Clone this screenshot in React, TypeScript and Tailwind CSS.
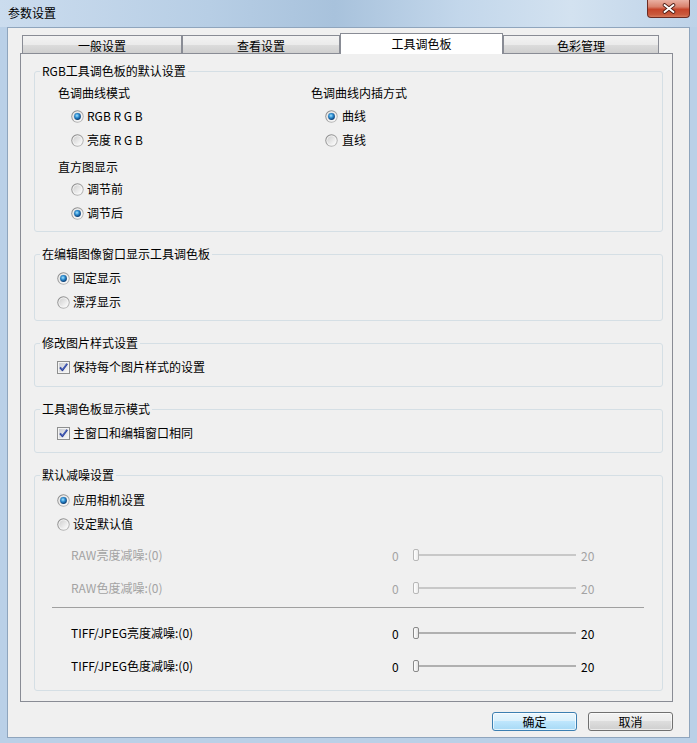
import React from "react";

function Radio({ checked }: { checked?: boolean }) {
  return (
    <svg width="13" height="13" viewBox="0 0 13 13" className="block shrink-0">
      <defs>
        <linearGradient id="radOuter" x1="0" y1="0" x2="1" y2="1">
          <stop offset="0" stopColor="#7f7f7f" />
          <stop offset="1" stopColor="#c4c4c4" />
        </linearGradient>
        <linearGradient id="radInner" x1="0" y1="0" x2="1" y2="1">
          <stop offset="0" stopColor="#cfcfcf" />
          <stop offset="1" stopColor="#fdfdfd" />
        </linearGradient>
        <radialGradient id="radDot" cx="0.42" cy="0.38" r="0.62">
          <stop offset="0" stopColor="#a6e4ff" />
          <stop offset="0.5" stopColor="#2a8bd0" />
          <stop offset="1" stopColor="#0a3a70" />
        </radialGradient>
      </defs>
      <circle cx="6.5" cy="6.5" r="6.2" fill="url(#radOuter)" />
      <circle cx="6.5" cy="6.5" r="5.2" fill="#f6f6f6" />
      <circle cx="6.5" cy="6.5" r="4.3" fill="url(#radInner)" />
      {checked && <circle cx="6.5" cy="6.5" r="3.4" fill="url(#radDot)" />}
    </svg>
  );
}

function Check() {
  return (
    <svg width="13" height="13" viewBox="0 0 13 13" className="block shrink-0">
      <defs>
        <linearGradient id="chkInner" x1="0" y1="0" x2="1" y2="1">
          <stop offset="0" stopColor="#c9ccd2" />
          <stop offset="1" stopColor="#f7f7f7" />
        </linearGradient>
      </defs>
      <rect x="0.5" y="0.5" width="12" height="12" fill="#f4f4f4" stroke="#8e8f8f" />
      <rect x="2" y="2" width="9" height="9" fill="url(#chkInner)" />
      <path d="M3 6.4 L5.4 9.2 L10.2 2.8" fill="none" stroke="#2b3f9a" strokeWidth="1.9" strokeLinejoin="round" />
      <path d="M3.6 6.6 L5.4 8.6 L9.6 3.2" fill="none" stroke="#5c7ad0" strokeWidth="0.7" />
    </svg>
  );
}

function Slider({ disabled }: { disabled?: boolean }) {
  return (
    <div className="relative w-[163px] h-[12px] flex items-center">
      <div className={disabled ? "w-full h-[2px] bg-[#c8c8c8]" : "w-full h-[2px] bg-[#b0b0b0]"} />
      <div
        className={
          disabled
            ? "absolute left-0 top-0 w-[6px] h-[12px] rounded-[2px] border border-[#b8b8b8] bg-[linear-gradient(90deg,#ffffff,#ececec)]"
            : "absolute left-0 top-0 w-[6px] h-[12px] rounded-[2px] border border-[#8a8a8a] bg-[linear-gradient(90deg,#ffffff,#e2e2e2)]"
        }
      />
    </div>
  );
}

function SliderRow({ label, disabled }: { label: string; disabled?: boolean }) {
  const color = disabled ? "text-[#a3a3a3]" : "text-black";
  return (
    <div className={"flex items-center h-[33px] pl-[36px] " + color}>
      <span className="w-[321px] leading-[16px]">{label}</span>
      <span className="w-[21px] leading-[16px] mt-[2px]">0</span>
      <Slider disabled={disabled} />
      <span className="ml-[5px] leading-[16px] mt-[2px]">20</span>
    </div>
  );
}

function RadioRow({ label, checked, className }: { label: string; checked?: boolean; className: string }) {
  return (
    <div className={"flex items-center h-[24px] " + className}>
      <Radio checked={checked} />
      <span className="leading-[16px]">{label}</span>
    </div>
  );
}

function Group({ title, className, children }: { title: string; className: string; children: React.ReactNode }) {
  return (
    <fieldset className={"border border-[#d5dfe5] rounded-[3px] m-0 p-0 " + className}>
      <legend className="ml-[5px] px-[2px] h-[16px] leading-[16px] text-[12px]">{title}</legend>
      {children}
    </fieldset>
  );
}

function Tab({ label, w, selected }: { label: string; w: string; selected?: boolean }) {
  if (selected) {
    return (
      <div className={"relative z-10 -mb-px h-[21px] border border-b-0 border-[#898c95] bg-white flex justify-center pt-[2px] " + w}>
        <span className="leading-[16px]">{label}</span>
      </div>
    );
  }
  return (
    <div
      className={
        "h-[18px] border border-b-0 border-[#898c95] bg-[linear-gradient(180deg,#f3f3f3_0%,#ebebeb_50%,#dddddd_50%,#cfcfcf_100%)] flex justify-center items-center pt-[2px] " +
        w
      }
    >
      <span className="leading-[16px]">{label}</span>
    </div>
  );
}

export default function App() {
  return (
    <div className="w-[697px] h-[743px] flex flex-col bg-[#bad0e7] font-['Noto_Sans_CJK_SC','Noto_Sans',sans-serif] text-[12px] text-black overflow-hidden">
      {/* title bar */}
      <div className="h-[27px] shrink-0 flex justify-between items-start pl-[8px] pr-[7px] bg-[linear-gradient(90deg,#cbdcee_0%,#b7cee5_30%,#a8c2dc_48%,#c3d7eb_66%,#d3e2f0_82%,#bdd2e8_100%)]">
        <span className="leading-[16px] mt-[5px]">参数设置</span>
        <div className="w-[43px] h-[18px] rounded-b-[4px] border border-t-0 border-[#6b2b22] bg-[linear-gradient(180deg,#eab0a2_0%,#d9826d_40%,#c6452b_55%,#c9593c_85%,#d77a5c_100%)] flex items-center justify-center">
          <svg width="14" height="11" viewBox="0 0 14 11">
            <path d="M2.5 2 L11.5 9 M11.5 2 L2.5 9" stroke="#4a1a12" strokeWidth="3.6" strokeLinecap="round" />
            <path d="M2.5 2 L11.5 9 M11.5 2 L2.5 9" stroke="#ffffff" strokeWidth="2" strokeLinecap="round" />
          </svg>
        </div>
      </div>

      {/* client area */}
      <div className="flex-1 mx-[7px] mb-[5px] border border-[#8fa5bd] bg-[#f0f0f0] flex flex-col">
        <div className="ml-[12px] mr-[16px] mt-[5px] flex flex-col">
          <div className="flex items-end h-[20px] pl-[2px]">
            <Tab label="一般设置" w="w-[160px]" />
            <Tab label="查看设置" w="w-[158px]" />
            <Tab label="工具调色板" w="w-[163px]" selected />
            <Tab label="色彩管理" w="w-[156px]" />
          </div>
          <div className="h-[649px] border border-[#898c95] bg-[#f0f0f0] pl-[13px] pr-[9px] pt-[9px] flex flex-col gap-[14px]">
            <Group title="RGB工具调色板的默认设置" className="pt-[3px] pb-[6px]">
              <div className="flex pl-[23px]">
                <div className="w-[253px] flex flex-col">
                  <div className="h-[22px] flex items-center leading-[16px]">色调曲线模式</div>
                  <RadioRow label="RGB R G B" checked className="pl-[13px] gap-[3px]" />
                  <RadioRow label="亮度 R G B" className="pl-[13px] gap-[3px]" />
                  <div className="h-[20px] mt-[5px] flex items-center leading-[16px]">直方图显示</div>
                  <RadioRow label="调节前" className="pl-[13px] gap-[3px]" />
                  <RadioRow label="调节后" checked className="pl-[13px] gap-[3px]" />
                </div>
                <div className="flex flex-col">
                  <div className="h-[22px] flex items-center leading-[16px]">色调曲线内插方式</div>
                  <RadioRow label="曲线" checked className="pl-[14px] gap-[4px]" />
                  <RadioRow label="直线" className="pl-[14px] gap-[4px]" />
                </div>
              </div>
            </Group>

            <Group title="在编辑图像窗口显示工具调色板" className="pt-[4px] pb-[6px]">
              <RadioRow label="固定显示" checked className="pl-[22px] gap-[3px]" />
              <RadioRow label="漂浮显示" className="pl-[22px] gap-[3px]" />
            </Group>

            <Group title="修改图片样式设置" className="pt-[4px] pb-[7px]">
              <div className="flex items-center h-[24px] pl-[22px] gap-[3px]">
                <Check />
                <span className="leading-[16px]">保持每个图片样式的设置</span>
              </div>
            </Group>

            <Group title="工具调色板显示模式" className="pt-[4px] pb-[7px]">
              <div className="flex items-center h-[24px] pl-[22px] gap-[3px]">
                <Check />
                <span className="leading-[16px]">主窗口和编辑窗口相同</span>
              </div>
            </Group>

            <Group title="默认减噪设置" className="pt-[5px] pb-[8px]">
              <RadioRow label="应用相机设置" checked className="pl-[22px] gap-[3px]" />
              <RadioRow label="设定默认值" className="pl-[22px] gap-[3px]" />
              <div className="mt-[2px]">
                <SliderRow label="RAW亮度减噪:(0)" disabled />
                <SliderRow label="RAW色度减噪:(0)" disabled />
              </div>
              <div className="mt-[3px] ml-[17px] mr-[18px] h-px bg-[#a0a0a0]" />
              <div className="mt-[8px]">
                <SliderRow label="TIFF/JPEG亮度减噪:(0)" />
                <SliderRow label="TIFF/JPEG色度减噪:(0)" />
              </div>
            </Group>
          </div>
        </div>

        <div className="flex justify-end gap-[11px] mt-[10px] mr-[16px]">
          <div className="w-[85px] h-[19px] rounded-[3px] border border-[#3c7fb1] bg-[linear-gradient(180deg,#eaf6fd_0%,#d9f0fc_50%,#bee6fd_50%,#a7d9f5_100%)] shadow-[inset_0_0_0_1px_rgba(255,255,255,0.7)] flex items-center justify-center">
            <span className="leading-[16px]">确定</span>
          </div>
          <div className="w-[85px] h-[19px] rounded-[3px] border border-[#707070] bg-[linear-gradient(180deg,#f2f2f2_0%,#ebebeb_50%,#dddddd_50%,#cfcfcf_100%)] shadow-[inset_0_0_0_1px_rgba(255,255,255,0.6)] flex items-center justify-center">
            <span className="leading-[16px]">取消</span>
          </div>
        </div>
      </div>
    </div>
  );
}
